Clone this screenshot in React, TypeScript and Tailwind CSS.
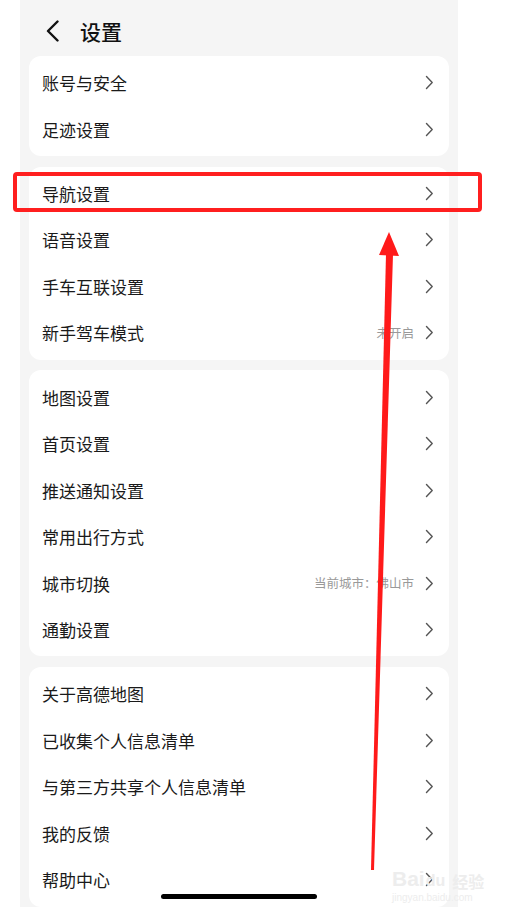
import React from "react";

type Row = { label: string; extra?: string };

const groups: Row[][] = [
  [{ label: "账号与安全" }, { label: "足迹设置" }],
  [
    { label: "导航设置" },
    { label: "语音设置" },
    { label: "手车互联设置" },
    { label: "新手驾车模式", extra: "未开启" },
  ],
  [
    { label: "地图设置" },
    { label: "首页设置" },
    { label: "推送通知设置" },
    { label: "常用出行方式" },
    { label: "城市切换", extra: "当前城市：佛山市" },
    { label: "通勤设置" },
  ],
  [
    { label: "关于高德地图" },
    { label: "已收集个人信息清单" },
    { label: "与第三方共享个人信息清单" },
    { label: "我的反馈" },
    { label: "帮助中心" },
  ],
];

const font = { fontFamily: '"Noto Sans CJK SC", "Noto Sans", sans-serif' };

function Chevron() {
  return (
    <svg width="9" height="15" viewBox="0 0 9 15" fill="none">
      <path d="M1.5 1.5 L7.2 7.5 L1.5 13.5" stroke="#555" strokeWidth="1.4" strokeLinecap="round" strokeLinejoin="round" />
    </svg>
  );
}

export default function App() {
  return (
    <div className="relative w-[513px] h-[912px] bg-white overflow-hidden" style={font}>
      <div className="ml-[20px] w-[438px] h-[907px] bg-[#f5f5f5] overflow-hidden">
        <div className="h-[56px] flex items-center pl-[26px] pt-[6px]">
          <svg width="14" height="22" viewBox="0 0 14 22" fill="none">
            <path d="M11.5 1.5 L2 11 L11.5 20.5" stroke="#111" strokeWidth="2.4" strokeLinecap="round" strokeLinejoin="round" />
          </svg>
          <span className="ml-[20px] text-[21px] font-medium text-[#111] leading-none">设置</span>
        </div>
        <div className="flex flex-col gap-[10.7px] px-[9px]">
          {groups.map((g, gi) => (
            <div key={gi} className="bg-white rounded-[12px] py-[3.5px]">
              {g.map((r) => (
                <div key={r.label} className="h-[46.5px] flex items-center pl-[13px] pr-[15px]">
                  <span className="text-[17px] text-[#1a1a1a] flex-1 leading-none">{r.label}</span>
                  {r.extra && <span className="text-[12.5px] text-[#999] mr-[11px] leading-none">{r.extra}</span>}
                  <Chevron />
                </div>
              ))}
            </div>
          ))}
        </div>
      </div>

      {/* Home indicator */}
      <div className="absolute left-[161px] top-[894px] w-[156px] h-[5px] rounded-full bg-black" />

      {/* Watermark */}
      <div className="absolute left-[392px] top-[868px] flex flex-col items-start leading-none" style={{ fontFamily: '"Liberation Sans", "Noto Sans CJK SC", sans-serif' }}>
        <div className="flex items-end text-[21px] font-bold text-[#ededed]">
          <span>Bai</span>
          <span className="text-[16px] mx-[1px]">du</span>
          <span className="text-[16px] ml-[6px]" style={font}>经验</span>
        </div>
        <span className="text-[10px] text-[#ededed] mt-[4px]">jingyan.baidu.com</span>
      </div>

      {/* Red highlight box */}
      <div className="absolute left-[13px] top-[172px] w-[469px] h-[40px] border-[4px] border-[#ff1f1f] rounded-[4px]" />

      {/* Red arrow */}
      <svg className="absolute left-0 top-0" width="513" height="912" viewBox="0 0 513 912">
        <polygon points="386,254 393,254 374,870 371,870" fill="#ff1a1a" />
        <polygon points="389,232 399,256 379,255" fill="#ff1a1a" />
      </svg>
    </div>
  );
}
